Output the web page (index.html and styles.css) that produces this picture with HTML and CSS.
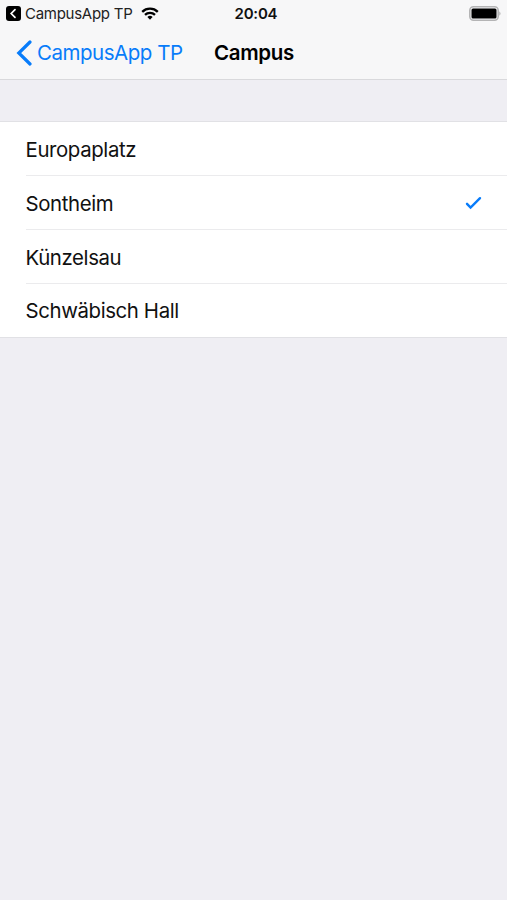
FILE: index.html
```html
<!DOCTYPE html>
<html lang="de">
<head>
<meta charset="utf-8">
<title>Campus</title>
<link rel="stylesheet" href="styles.css">
</head>
<body>
<header class="header">
  <div class="status">
    <div class="status-left">
      <svg class="return-icon" width="15" height="15" viewBox="0 0 15 15"><rect width="15" height="15" rx="3" fill="#000"/><path d="M9 3.7 5.2 7.5 9 11.3" fill="none" stroke="#fff" stroke-width="1.7" stroke-linecap="round"/></svg>
      <span class="return-label">CampusApp TP</span>
      <svg class="wifi" width="18" height="13" viewBox="0 0 18 13"><g fill="none" stroke="#000" stroke-width="2.3"><path d="M1.2 4.8a11.2 11.2 0 0 1 15.6 0"/><path d="M4 7.8a7.2 7.2 0 0 1 10 0"/></g><path d="M9 12.7 6.4 10a3.8 3.8 0 0 1 5.2 0z"/></svg>
    </div>
    <span class="clock">20:04</span>
    <svg class="battery" width="33" height="15" viewBox="0 0 33 15"><rect x=".8" y=".8" width="28.4" height="13.4" rx="3.7" fill="none" stroke="#b4b4b5" stroke-width="1.6"/><rect x="2.5" y="2.5" width="25" height="10" rx="1.5"/><path d="M30.4 5.2q2.2 2.3 0 4.6z" fill="#aaa"/></svg>
  </div>
  <nav class="nav">
    <a class="back"><svg width="16" height="28" viewBox="0 0 16 28"><path d="M14 3 2.8 14 14 25" fill="none" stroke="#087cfa" stroke-width="3.2" stroke-linecap="round"/></svg><span class="back-label">CampusApp TP</span></a>
    <h1 class="title">Campus</h1>
  </nav>
</header>
<ul class="list">
  <li class="row"><span class="label">Europaplatz</span></li>
  <li class="row"><span class="label">Sontheim</span><svg class="check" width="17" height="14" viewBox="0 0 17 14"><path d="m2 7.8 3.6 3.7L15 2.2" fill="none" stroke="#087cfa" stroke-width="2.4" stroke-linecap="round"/></svg></li>
  <li class="row"><span class="label">Künzelsau</span></li>
  <li class="row"><span class="label">Schwäbisch Hall</span></li>
</ul>
</body>
</html>
```
FILE: styles.css
```css
* { box-sizing: border-box; }
body { margin: 0; min-height: 900px; background: #efeef3; color: #111; font-family: Inter, "Liberation Sans", sans-serif; }
svg { display: block; flex: none; }
.header { height: 80px; background: #f7f7f8; border-bottom: 1px solid #d9d9dc; }
.status { height: 27px; display: grid; grid-template-columns: 234.5px 1fr 38px; align-items: center; }
.status-left { display: flex; align-items: center; padding-left: 6px; }
.return-label { margin-left: 4px; width: 107px; font-size: 15px; letter-spacing: -.27px; color: #222; white-space: nowrap; }
.wifi { margin-left: 9px; }
.battery { margin-top: -1px; }
.clock { font-size: 15px; font-weight: 600; letter-spacing: -.2px; }
.nav { height: 51px; display: flex; align-items: center; padding-left: 16px; }
.back { display: flex; align-items: center; color: #087cfa; }
.back-label { margin-left: 5px; width: 146px; font-size: 20.5px; letter-spacing: -.48px; white-space: nowrap; }
.title { margin: 0 0 0 31px; font-size: 20.5px; font-weight: 600; letter-spacing: -.35px; color: #000; }
.list { list-style: none; margin: 41px 0 0; padding: 0 0 0 26px; background: #fff; border-top: 1px solid #e1e1e5; border-bottom: 1px solid #e1e1e5; }
.row { height: 54px; display: flex; align-items: center; justify-content: space-between; padding-right: 25px; border-bottom: 1px solid #ebebed; }
.row:last-child { height: 53px; border-bottom: 0; }
.label { padding-top: 2px; margin-left: -.5px; font-size: 20.4px; letter-spacing: -.38px; }
.row:last-child .label { padding-top: 0; }
```
